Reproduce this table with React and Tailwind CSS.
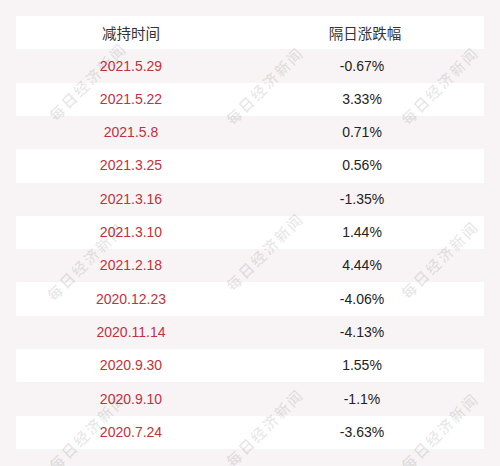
const rows = [
  ['2021.5.29', '-0.67%'],
  ['2021.5.22', '3.33%'],
  ['2021.5.8', '0.71%'],
  ['2021.3.25', '0.56%'],
  ['2021.3.16', '-1.35%'],
  ['2021.3.10', '1.44%'],
  ['2021.2.18', '4.44%'],
  ['2020.12.23', '-4.06%'],
  ['2020.11.14', '-4.13%'],
  ['2020.9.30', '1.55%'],
  ['2020.9.10', '-1.1%'],
  ['2020.7.24', '-3.63%'],
];

// watermark centres (x, y)
const marks = [
  [88, 82], [265, 86], [440, 86],
  [86, 262], [265, 252], [440, 260],
  [88, 432], [265, 428], [440, 432],
];

export default function App() {
  return (
    <div className="relative w-[500px] h-[466px] overflow-hidden bg-[#f8f4f5] pt-[16px] px-[16px] font-['Liberation_Sans','Noto_Sans_CJK_SC',sans-serif]">
      <div className="flex flex-col">
        <div className="grid grid-cols-[230px_238px] h-[33.4px] items-center bg-white text-[14.5px] text-[#333] font-['Noto_Sans_CJK_SC',sans-serif]">
          <div className="text-center">减持时间</div>
          <div className="text-center">隔日涨跌幅</div>
        </div>
        {rows.map(([date, pct], i) => (
          <div
            key={date}
            className={`grid grid-cols-[230px_238px] h-[33.3px] items-center text-[14px] ${i % 2 === 0 ? 'bg-[#f8f4f5]' : 'bg-white'}`}
          >
            <div className="text-center text-[#c4303c]">{date}</div>
            <div className="text-center text-[#222] pr-[6px]">{pct}</div>
          </div>
        ))}
      </div>

      {/* 每日经济新闻 watermark */}
      {marks.map(([x, y], i) => (
        <div
          key={i}
          className="absolute pointer-events-none whitespace-nowrap text-[15px] font-bold tracking-[2px] text-[#000]/[0.09] font-['Noto_Sans_CJK_SC',serif]"
          style={{ left: x, top: y, transform: 'translate(-50%, -50%) rotate(-45deg)' }}
        >
          每日经济新闻
        </div>
      ))}
    </div>
  );
}
